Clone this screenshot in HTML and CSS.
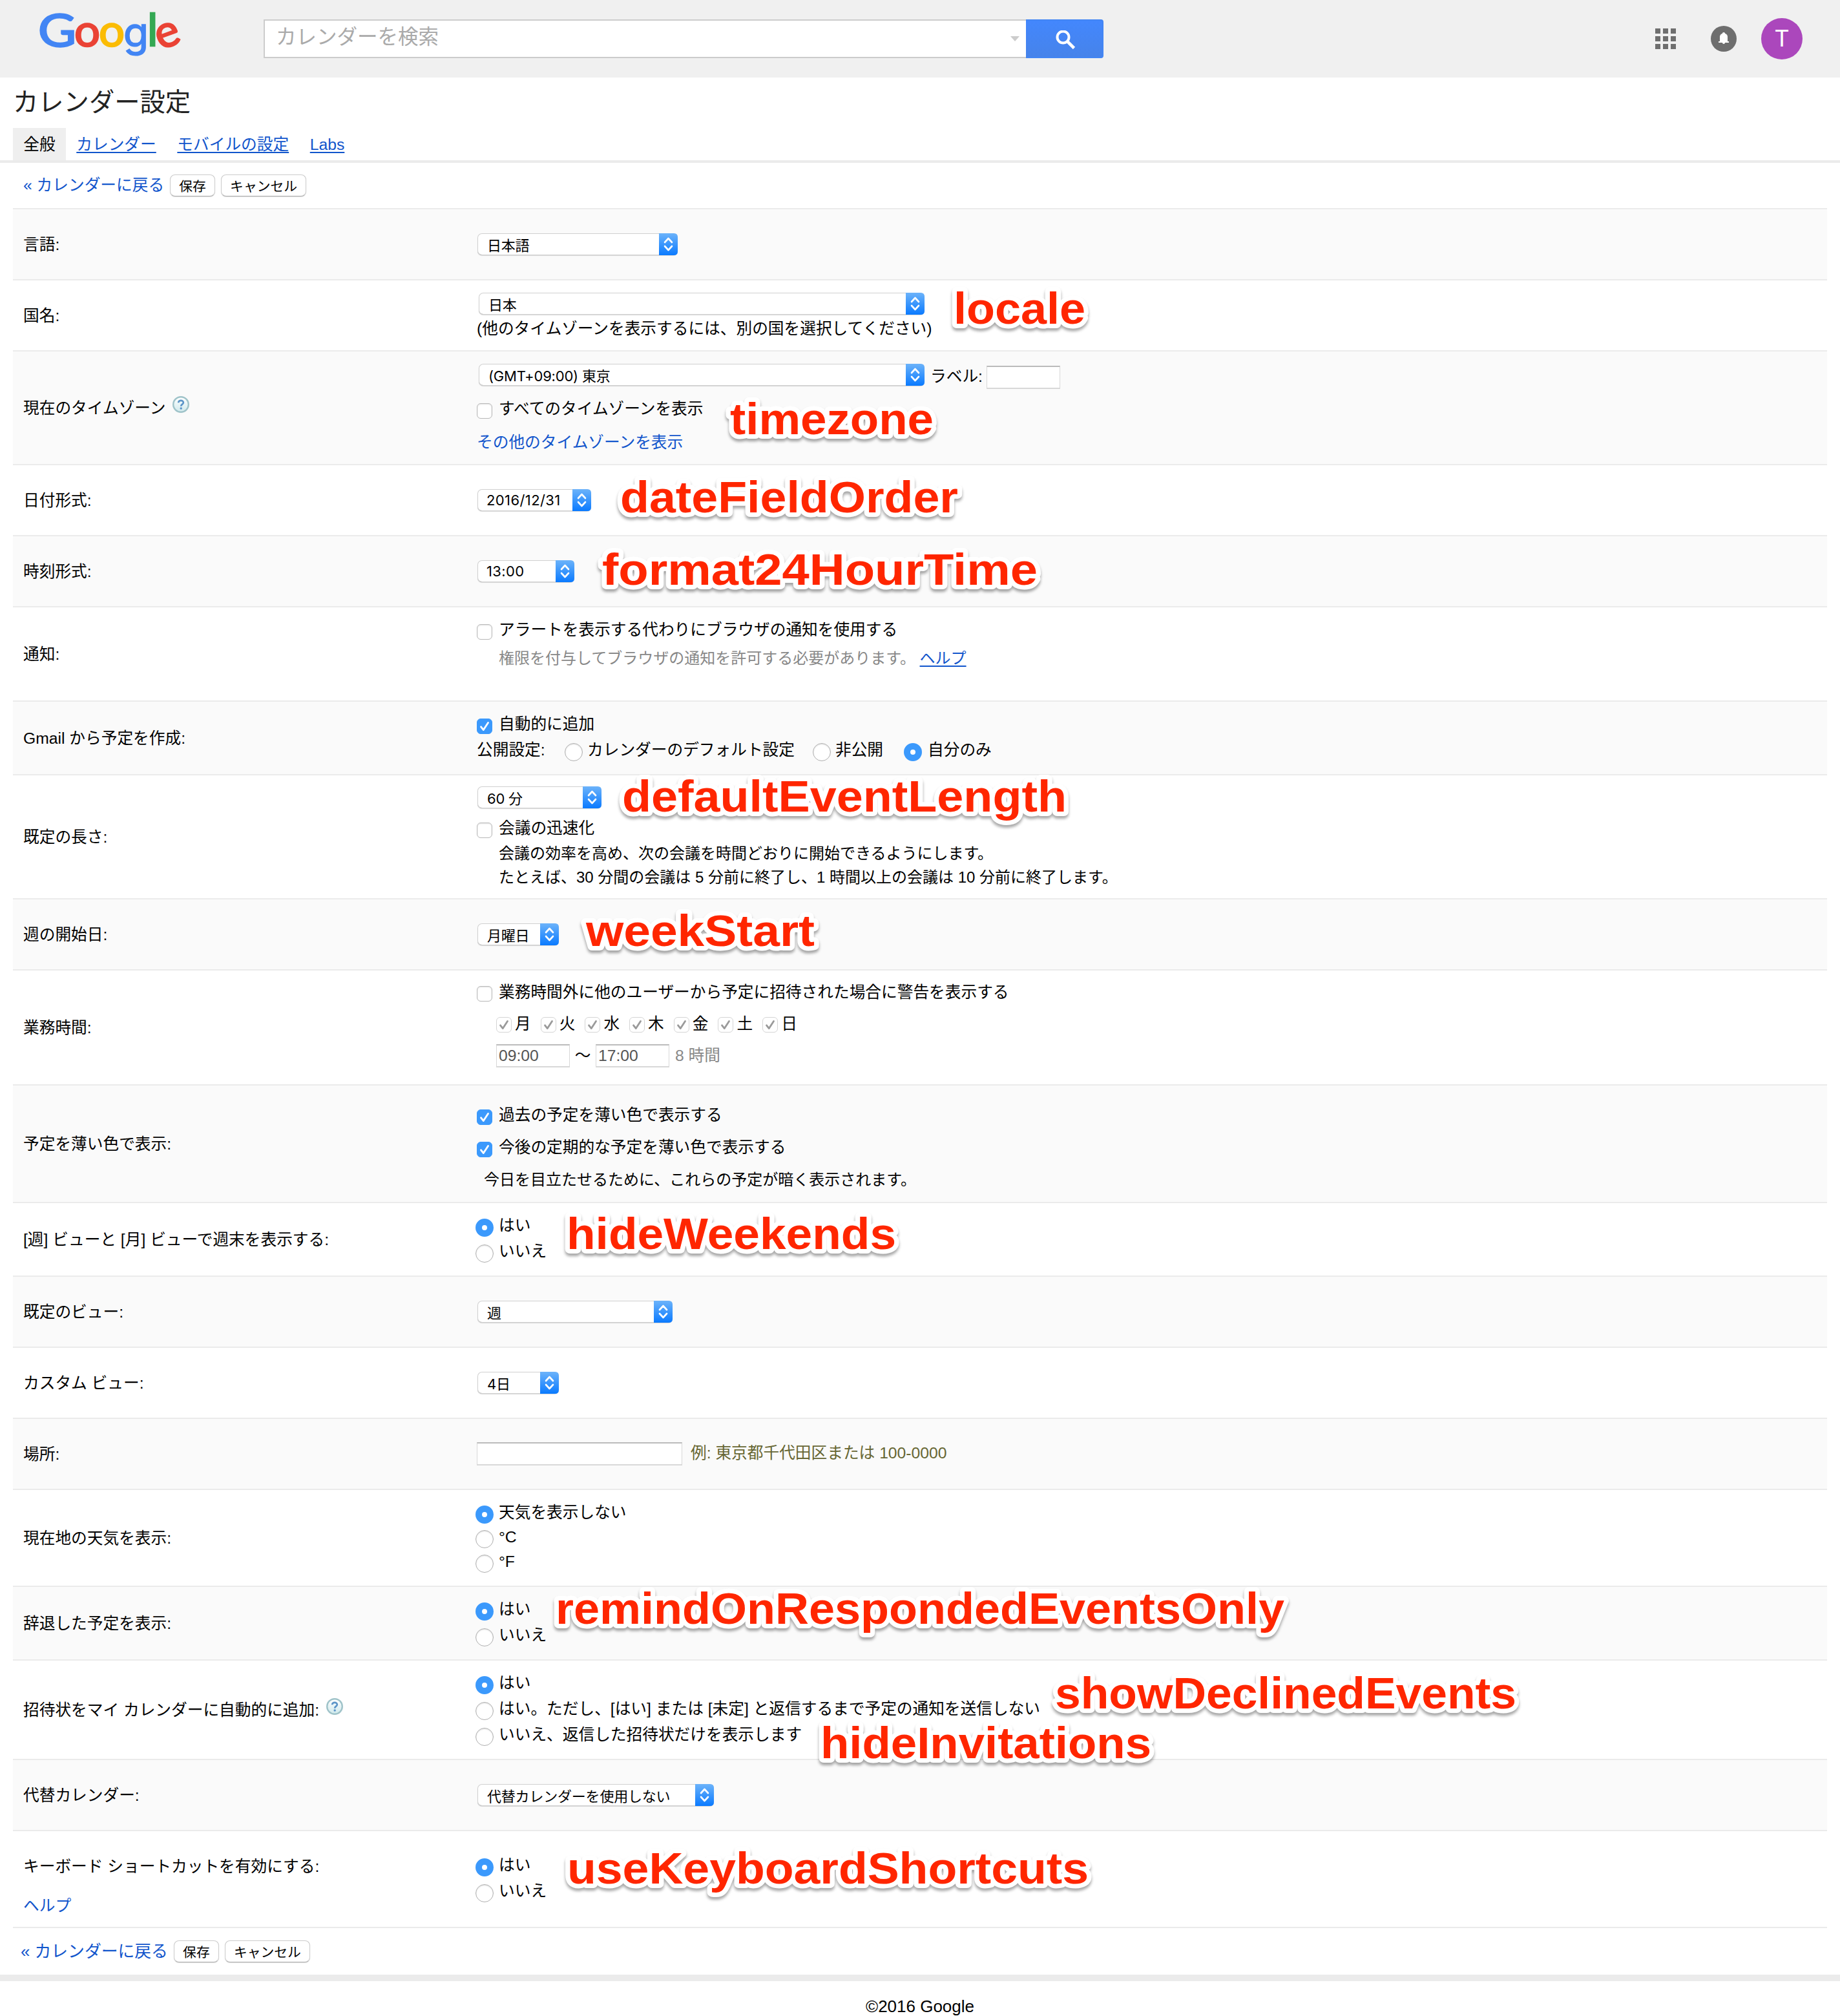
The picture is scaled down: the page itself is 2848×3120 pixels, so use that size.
FILE: index.html
```html
<!DOCTYPE html>
<html lang="ja">
<head>
<meta charset="utf-8">
<title>カレンダー設定</title>
<link rel="stylesheet" href="styles.css">
</head>
<body>
<svg class="defs" width="0" height="0" aria-hidden="true">
  <defs>
    <linearGradient id="cap-fill" x1="0" y1="0" x2="0" y2="1"><stop offset="0" stop-color="#6cb3fa"/><stop offset="1" stop-color="#0a7aff"/></linearGradient>
    <linearGradient id="help-fill" x1="0" y1="0" x2="0" y2="1"><stop offset="0" stop-color="#fff"/><stop offset="1" stop-color="#cfe9ec"/></linearGradient>
    <symbol id="arrows" viewBox="0 0 29 34"><path d="M0 0H23Q29 0 29 6V28Q29 34 23 34H0Z" fill="url(#cap-fill)"/><path d="M9 14L14.5 8L20 14M9 20L14.5 26L20 20" fill="none" stroke="#fff" stroke-width="2.6" stroke-linecap="round" stroke-linejoin="round"/></symbol>
    <symbol id="tick" viewBox="0 0 24 24"><path d="M6.5 12.8L10.3 17.6L17.5 6.5" fill="none" stroke="currentColor" stroke-width="2.8" stroke-linecap="round" stroke-linejoin="round"/></symbol>
    <symbol id="help" viewBox="0 0 26 26"><circle cx="13" cy="13" r="11.8" fill="url(#help-fill)" stroke="#9fc3c9" stroke-width="2.4"/><path d="M9.2 10.2C9.2 5.6 17 5.8 16.8 10.2C16.7 12.8 13.2 12.6 13.2 15.8" fill="none" stroke="#5b94c8" stroke-width="2.7"/><circle cx="13.2" cy="19" r="1.7" fill="#5b94c8"/></symbol>
  </defs>
</svg>

<header class="topbar">
  <svg class="logo" width="232" height="120" viewBox="0 0 232 120" role="img" aria-label="Google">
    <g class="logo-text">
      <text x="-1" y="72" textLength="59" lengthAdjust="spacingAndGlyphs" class="blue">G</text>
      <text x="55" y="72" textLength="40" lengthAdjust="spacingAndGlyphs" class="red">o</text>
      <text x="93" y="72" textLength="40" lengthAdjust="spacingAndGlyphs" class="yellow">o</text>
      <text x="131" y="72" textLength="39" lengthAdjust="spacingAndGlyphs" class="blue tail">g</text>
      <text x="168" y="71" class="green">l</text>
      <text x="181" y="72" textLength="37" lengthAdjust="spacingAndGlyphs" class="red" transform="rotate(-20 200 55)">e</text>
    </g>
  </svg>
  <div class="search">
    <div class="search-box"><span>カレンダーを検索</span><i class="caret"></i></div>
    <div class="search-button">
      <svg width="32" height="32" viewBox="0 0 32 32"><circle cx="12.500" cy="10.500" r="9" fill="none" stroke="#fff" stroke-width="4"/><path d="M18.500 16.500L29.500 27.500" stroke="#fff" stroke-width="4.600"/></svg>
    </div>
  </div>
  <div class="account">
    <svg class="apps" width="32" height="32" viewBox="0 0 32 32"><path fill="#6e6e6e" d="M0 0h8v8H0zM12 0h8v8h-8zM24 0h8v8h-8zM0 12h8v8H0zM12 12h8v8h-8zM24 12h8v8h-8zM0 24h8v8H0zM12 24h8v8h-8zM24 24h8v8h-8z"/></svg>
    <svg class="bell" width="40" height="40" viewBox="0 0 40 40"><circle cx="20" cy="20" r="20" fill="#6e6e6e"/><path fill="#fff" d="M20 10C21.300 10 22 10.800 22 11.700C25 12.600 26 15 26 17V24H28V26H22C22 27.200 21.200 28 20 28S18 27.200 18 26H12V24H14V17C14 15 15 12.600 18 11.700C18 10.800 18.700 10 20 10Z"/></svg>
    <div class="avatar">T</div>
  </div>
</header>

<h1>カレンダー設定</h1>
<nav class="tabs">
  <span class="tab active">全般</span><span class="tab"><a>カレンダー</a></span><span class="tab"><a>モバイルの設定</a></span><span class="tab"><a>Labs</a></span>
</nav>
<div class="toolbar">
  <a>« カレンダーに戻る</a><span class="button save">保存</span><span class="button cancel">キャンセル</span>
</div>

<main class="settings">
  <section class="row shade h110"><div class="label">言語:</div>
    <div class="content middle"><div class="line"><div class="select w310"><span>日本語</span><svg><use href="#arrows"/></svg></div></div></div></section>

  <section class="row h110"><div class="label">国名:</div>
    <div class="content country"><div class="line"><div class="select w690"><span>日本</span><svg><use href="#arrows"/></svg></div></div>
      <div class="line">(他のタイムゾーンを表示するには、別の国を選択してください)</div></div></section>

  <section class="row shade h176"><div class="label">現在のタイムゾーン<svg class="help"><use href="#help"/></svg></div>
    <div class="content zone"><div class="line"><div class="select w690"><span>(GMT+09:00) 東京</span><svg><use href="#arrows"/></svg></div><span class="zone-label">ラベル:</span><span class="field w114 low"></span></div>
      <div class="line"><i class="check"></i>すべてのタイムゾーンを表示</div>
      <div class="line"><a>その他のタイムゾーンを表示</a></div></div></section>

  <section class="row h110"><div class="label">日付形式:</div>
    <div class="content middle"><div class="line"><div class="select w176 digits"><span>2016/12/31</span><svg><use href="#arrows"/></svg></div></div></div></section>

  <section class="row shade h110"><div class="label">時刻形式:</div>
    <div class="content middle"><div class="line"><div class="select w150 digits"><span>13:00</span><svg><use href="#arrows"/></svg></div></div></div></section>

  <section class="row h146"><div class="label">通知:</div>
    <div class="content notify"><div class="line"><i class="check"></i>アラートを表示する代わりにブラウザの通知を使用する</div>
      <div class="line small indent gray">権限を付与してブラウザの通知を許可する必要があります。&nbsp;<a class="under">ヘルプ</a></div></div></section>

  <section class="row shade h114"><div class="label">Gmail から予定を作成:</div>
    <div class="content pair"><div class="line"><i class="check on"><svg><use href="#tick"/></svg></i>自動的に追加</div>
      <div class="line privacy"><span>公開設定:</span><span class="option"><i class="radio"></i>カレンダーのデフォルト設定</span><span class="option"><i class="radio"></i>非公開</span><span class="option"><i class="radio on"></i>自分のみ</span></div></div></section>

  <section class="row h192"><div class="label">既定の長さ:</div>
    <div class="content length"><div class="line"><div class="select w192"><span>60 分</span><svg><use href="#arrows"/></svg></div></div>
      <div class="line"><i class="check"></i>会議の迅速化</div>
      <div class="line small indent">会議の効率を高め、次の会議を時間どおりに開始できるようにします。</div>
      <div class="line small indent">たとえば、30 分間の会議は 5 分前に終了し、1 時間以上の会議は 10 分前に終了します。</div></div></section>

  <section class="row shade h110"><div class="label">週の開始日:</div>
    <div class="content middle"><div class="line"><div class="select w126"><span>月曜日</span><svg><use href="#arrows"/></svg></div></div></div></section>

  <section class="row h178"><div class="label">業務時間:</div>
    <div class="content hours"><div class="line"><i class="check"></i>業務時間外に他のユーザーから予定に招待された場合に警告を表示する</div>
      <div class="line days">
        <span class="day"><i class="check off"><svg><use href="#tick"/></svg></i>月</span><span class="day"><i class="check off"><svg><use href="#tick"/></svg></i>火</span><span class="day"><i class="check off"><svg><use href="#tick"/></svg></i>水</span><span class="day"><i class="check off"><svg><use href="#tick"/></svg></i>木</span><span class="day"><i class="check off"><svg><use href="#tick"/></svg></i>金</span><span class="day"><i class="check off"><svg><use href="#tick"/></svg></i>土</span><span class="day"><i class="check off"><svg><use href="#tick"/></svg></i>日</span>
      </div>
      <div class="line times"><span class="field w114">09:00</span><span class="wave">～</span><span class="field w114">17:00</span><span class="span gray">8 時間</span></div></div></section>

  <section class="row shade h182"><div class="label">予定を薄い色で表示:</div>
    <div class="content dim"><div class="line"><i class="check on"><svg><use href="#tick"/></svg></i>過去の予定を薄い色で表示する</div>
      <div class="line"><i class="check on"><svg><use href="#tick"/></svg></i>今後の定期的な予定を薄い色で表示する</div>
      <div class="line small note">今日を目立たせるために、これらの予定が暗く表示されます。</div></div></section>

  <section class="row h114"><div class="label">[週] ビューと [月] ビューで週末を表示する:</div>
    <div class="content pair"><div class="line"><i class="radio on"></i>はい</div><div class="line"><i class="radio"></i>いいえ</div></div></section>

  <section class="row shade h110"><div class="label">既定のビュー:</div>
    <div class="content middle"><div class="line"><div class="select w302"><span>週</span><svg><use href="#arrows"/></svg></div></div></div></section>

  <section class="row h110"><div class="label">カスタム ビュー:</div>
    <div class="content middle"><div class="line"><div class="select w126"><span>4日</span><svg><use href="#arrows"/></svg></div></div></div></section>

  <section class="row shade h110"><div class="label">場所:</div>
    <div class="content middle"><div class="line"><span class="field w318"></span><span class="example">例: 東京都千代田区または 100-0000</span></div></div></section>

  <section class="row h150"><div class="label">現在地の天気を表示:</div>
    <div class="content weather"><div class="line"><i class="radio on"></i>天気を表示しない</div><div class="line"><i class="radio"></i>°C</div><div class="line"><i class="radio"></i>°F</div></div></section>

  <section class="row shade h114"><div class="label">辞退した予定を表示:</div>
    <div class="content pair"><div class="line"><i class="radio on"></i>はい</div><div class="line"><i class="radio"></i>いいえ</div></div></section>

  <section class="row h154"><div class="label">招待状をマイ カレンダーに自動的に追加:<svg class="help"><use href="#help"/></svg></div>
    <div class="content pair"><div class="line"><i class="radio on"></i>はい</div><div class="line"><i class="radio"></i>はい。ただし、[はい] または [未定] と返信するまで予定の通知を送信しない</div><div class="line"><i class="radio"></i>いいえ、返信した招待状だけを表示します</div></div></section>

  <section class="row shade h110"><div class="label">代替カレンダー:</div>
    <div class="content middle"><div class="line"><div class="select w366"><span>代替カレンダーを使用しない</span><svg><use href="#arrows"/></svg></div></div></div></section>

  <section class="row h150"><div class="label stacked"><span>キーボード ショートカットを有効にする:</span><a>ヘルプ</a></div>
    <div class="content keys"><div class="line"><i class="radio on"></i>はい</div><div class="line"><i class="radio"></i>いいえ</div></div></section>
</main>

<div class="toolbar bottom">
  <a>« カレンダーに戻る</a><span class="button save">保存</span><span class="button cancel">キャンセル</span>
</div>
<footer>©2016 Google</footer>

<svg class="notes" width="2848" height="3120" viewBox="0 0 2848 3120">
  <text x="1476" y="501" textLength="204" lengthAdjust="spacingAndGlyphs">locale</text>
  <text x="1130" y="672" textLength="315" lengthAdjust="spacingAndGlyphs">timezone</text>
  <text x="960" y="792.500" textLength="523" lengthAdjust="spacingAndGlyphs">dateFieldOrder</text>
  <text x="932" y="905" textLength="674" lengthAdjust="spacingAndGlyphs">format24HourTime</text>
  <text x="963" y="1256" textLength="688" lengthAdjust="spacingAndGlyphs">defaultEventLength</text>
  <text x="907" y="1464" textLength="354" lengthAdjust="spacingAndGlyphs">weekStart</text>
  <text x="877" y="1933" textLength="510" lengthAdjust="spacingAndGlyphs">hideWeekends</text>
  <text x="860" y="2513" textLength="1128" lengthAdjust="spacingAndGlyphs">remindOnRespondedEventsOnly</text>
  <text x="1633" y="2644" textLength="714" lengthAdjust="spacingAndGlyphs">showDeclinedEvents</text>
  <text x="1270" y="2721" textLength="512" lengthAdjust="spacingAndGlyphs">hideInvitations</text>
  <text x="878" y="2915" textLength="807" lengthAdjust="spacingAndGlyphs">useKeyboardShortcuts</text>
</svg>
</body>
</html>
```
FILE: styles.css
```css
* { box-sizing: border-box; }
body {
  position: relative;
  margin: 0;
  width: 2848px;
  height: 3120px;
  overflow: hidden;
  background: #fff;
  color: #000;
  font: 24.7px/36px "Liberation Sans", "Noto Sans CJK JP", sans-serif;
  white-space: nowrap;
}
a { color: #1155cc; }
svg { display: block; flex: none; }
.defs { position: absolute; }

/* top bar */
.topbar { display: flex; height: 120px; padding-left: 60px; background: #f0f0f0; }
.logo { margin-right: 116px; }
.logo-text { font: 69px Lato, sans-serif; stroke-width: 2.4px; }
.tail { font: 62px Inter, sans-serif; stroke-width: 1.5px; }
.blue { fill: #4285f4; stroke: #4285f4; }
.red { fill: #ea4335; stroke: #ea4335; }
.yellow { fill: #fbbc05; stroke: #fbbc05; }
.green { fill: #34a853; stroke: #34a853; }
.search { display: flex; width: 1300px; height: 60px; margin-top: 30px; }
.search-box {
  display: flex;
  justify-content: space-between;
  width: 1180px;
  padding: 3px 10px 0 17px;
  border: 2px solid #ccc;
  border-right: 0;
  background: #fff;
  color: #aaa;
  font-size: 31.5px;
  line-height: 44px;
}
.caret { margin-top: 21px; width: 14px; height: 8px; background: #ccc; clip-path: polygon(0 0, 100% 0, 50% 100%); }
.search-button {
  display: flex;
  width: 120px;
  padding: 15px 0 0 45px;
  border: 2px solid #4285f4;
  border-left: 0;
  border-radius: 0 4px 4px 0;
  background: linear-gradient(#4387fd, #4683ea);
}
.account { display: flex; align-items: center; margin-left: auto; padding-right: 58px; }
.apps { margin-right: 54px; }
.bell { margin-right: 38px; }
.avatar {
  width: 64px;
  height: 64px;
  border-radius: 50%;
  background: #ab47bc;
  color: #fff;
  font: 36px/65px Roboto, sans-serif;
  text-align: center;
}

/* heading */
h1 { height: 78px; margin: 0; padding-left: 20px; color: #222; font-size: 39.3px; font-weight: 400; line-height: 76px; }
.tabs { display: flex; height: 54px; padding-left: 20px; border-bottom: 4px solid #ebebeb; }
.tab { padding: 0 16.3px; line-height: 51px; }
.active { background: #efefef; }
.tab a, .under { text-decoration: underline; text-decoration-thickness: 2px; text-underline-offset: 3px; text-decoration-skip-ink: none; }
.toolbar { display: flex; align-items: center; height: 70px; padding-left: 36px; }
.toolbar a { margin-right: 9px; }
.bottom { height: 72px; padding: 0 0 1px 32px; font-size: 25.8px; }
.button {
  height: 34px;
  margin-right: 9px;
  border: 1px solid #ccc;
  border-bottom-color: #b0b0b0;
  border-radius: 8px;
  background: #fff;
  box-shadow: 0 1px 1px rgba(0, 0, 0, .15);
  font-size: 20.8px;
  line-height: 35px;
  text-align: center;
}
.save { width: 70px; }
.cancel { width: 132px; }

/* setting rows */
.settings { margin: 0 20px; border-bottom: 2px solid #ebebeb; }
.row { display: grid; grid-template-columns: 702px 1fr; padding-left: 16px; border-top: 2px solid #ebebeb; }
.shade { background: #fafafa; }
.h110 { height: 110px; }
.h114 { height: 114px; }
.h146 { height: 146px; }
.h150 { height: 150px; }
.h154 { height: 154px; }
.h176 { height: 176px; }
.h178 { height: 178px; }
.h182 { height: 182px; }
.h192 { height: 192px; }
.label { display: flex; align-items: center; padding-top: 2px; }
.stacked { flex-direction: column; align-items: flex-start; justify-content: center; gap: 25px; padding-top: 22px; }
.help { width: 26px; height: 26px; margin: -12px 0 0 11px; }
.content { display: grid; align-content: start; }
.middle { align-content: center; }
.line { display: flex; align-items: center; }
.country { padding-top: 17px; grid-template-rows: 38px 40px; }
.zone { padding-top: 16px; grid-template-rows: 40px 66px 37px; }
.notify { padding-top: 13px; grid-template-rows: 44px 44px; }
.pair { padding-top: 15px; grid-auto-rows: 40px; }
.length { padding-top: 14px; grid-template-rows: 40px 56px 21px 54px; }
.hours { padding-top: 9px; grid-template-rows: 49px 49px 50px; }
.dim { padding-top: 21px; grid-auto-rows: 50px; }
.weather { padding-top: 16px; grid-auto-rows: 38px; }
.keys { padding-top: 33px; grid-auto-rows: 40px; }
.small { font-size: 24px; }
.indent { padding-left: 34px; }
.note { padding-left: 11px; }
.gray { color: #888; }
.example { margin-left: 13px; margin-top: -2px; color: #663; }

/* controls */
.select {
  display: flex;
  justify-content: space-between;
  height: 34px;
  margin-left: 1px;
  padding-left: 15px;
  border-radius: 7px;
  background: #fff;
  box-shadow: inset 0 0 0 1px #d0d0d0, inset 0 -1px 0 #b0b0b0, 0 1px 1px rgba(0, 0, 0, .15);
  font: 22px/39px Inter, "Noto Sans CJK JP", sans-serif;
  letter-spacing: -.2px;
}
.select svg { width: 29px; height: 34px; }
.digits { padding-left: 14px; line-height: 34px; letter-spacing: .4px; }
.w126 { width: 126px; }
.w150 { width: 150px; }
.w176 { width: 176px; }
.w192 { width: 192px; }
.w302 { width: 302px; }
.w310 { width: 310px; }
.w366 { width: 366px; }
.w690 { width: 690px; margin-left: 3px; }
.field {
  height: 36px;
  padding-left: 3px;
  border: 2px solid #d8d8d8;
  border-top-color: #bbb;
  border-left-width: 1px;
  border-right-width: 1px;
  background: #fff;
  color: #545454;
  line-height: 31px;
}
.w114 { width: 114px; }
.w318 { width: 318px; }
.low { margin-top: 8px; }
.zone-label { width: 87px; margin: 6px 0 0 9px; }
.check {
  flex: none;
  width: 24px;
  height: 24px;
  margin: 5px 10px 0 0;
  border: 1px solid #b8b8b8;
  border-radius: 6px;
  background: #fff;
  box-shadow: inset 0 1px 2px rgba(0, 0, 0, .12);
}
.check svg { width: 24px; height: 24px; margin: -1px; }
.check.on { border-color: #3b99fc; background: #3b99fc; box-shadow: none; color: #fff; }
.check.off { margin: 3px 5px 0 0; border-color: #d5d5d5; color: #9a9a9a; box-shadow: none; }
.radio {
  flex: none;
  width: 28px;
  height: 28px;
  margin: 6px 8px 0 -2px;
  border: 1px solid #b0b0b0;
  border-radius: 50%;
  background: #fff;
  box-shadow: inset 0 1px 2px rgba(0, 0, 0, .15);
}
.radio.on { border: 10px solid #3b99fc; box-shadow: none; }
.privacy > span:first-child { width: 108px; }
.option { display: flex; align-items: center; margin-left: 30px; }
.option .radio { margin-right: 7px; }
.option:last-child { margin-left: 34px; }
.option:last-child .radio { margin-right: 9px; }
.days { padding-left: 30px; }
.day { display: flex; align-items: center; width: 68.7px; }
.times { padding-left: 30px; }
.wave { width: 40px; text-align: center; }
.span { margin-left: 9px; }

/* footer */
footer { border-top: 10px solid #ebebeb; padding-top: 21px; font-size: 26px; text-align: center; }

/* callouts over the form */
.notes { position: absolute; left: 0; top: 0; filter: drop-shadow(0 4px 2px rgba(0, 0, 0, .35)); }
.notes text {
  font: bold 69px "Liberation Sans", sans-serif;
  fill: #ff2600;
  stroke: #fff;
  stroke-width: 14px;
  stroke-linejoin: round;
  paint-order: stroke;
}
```
